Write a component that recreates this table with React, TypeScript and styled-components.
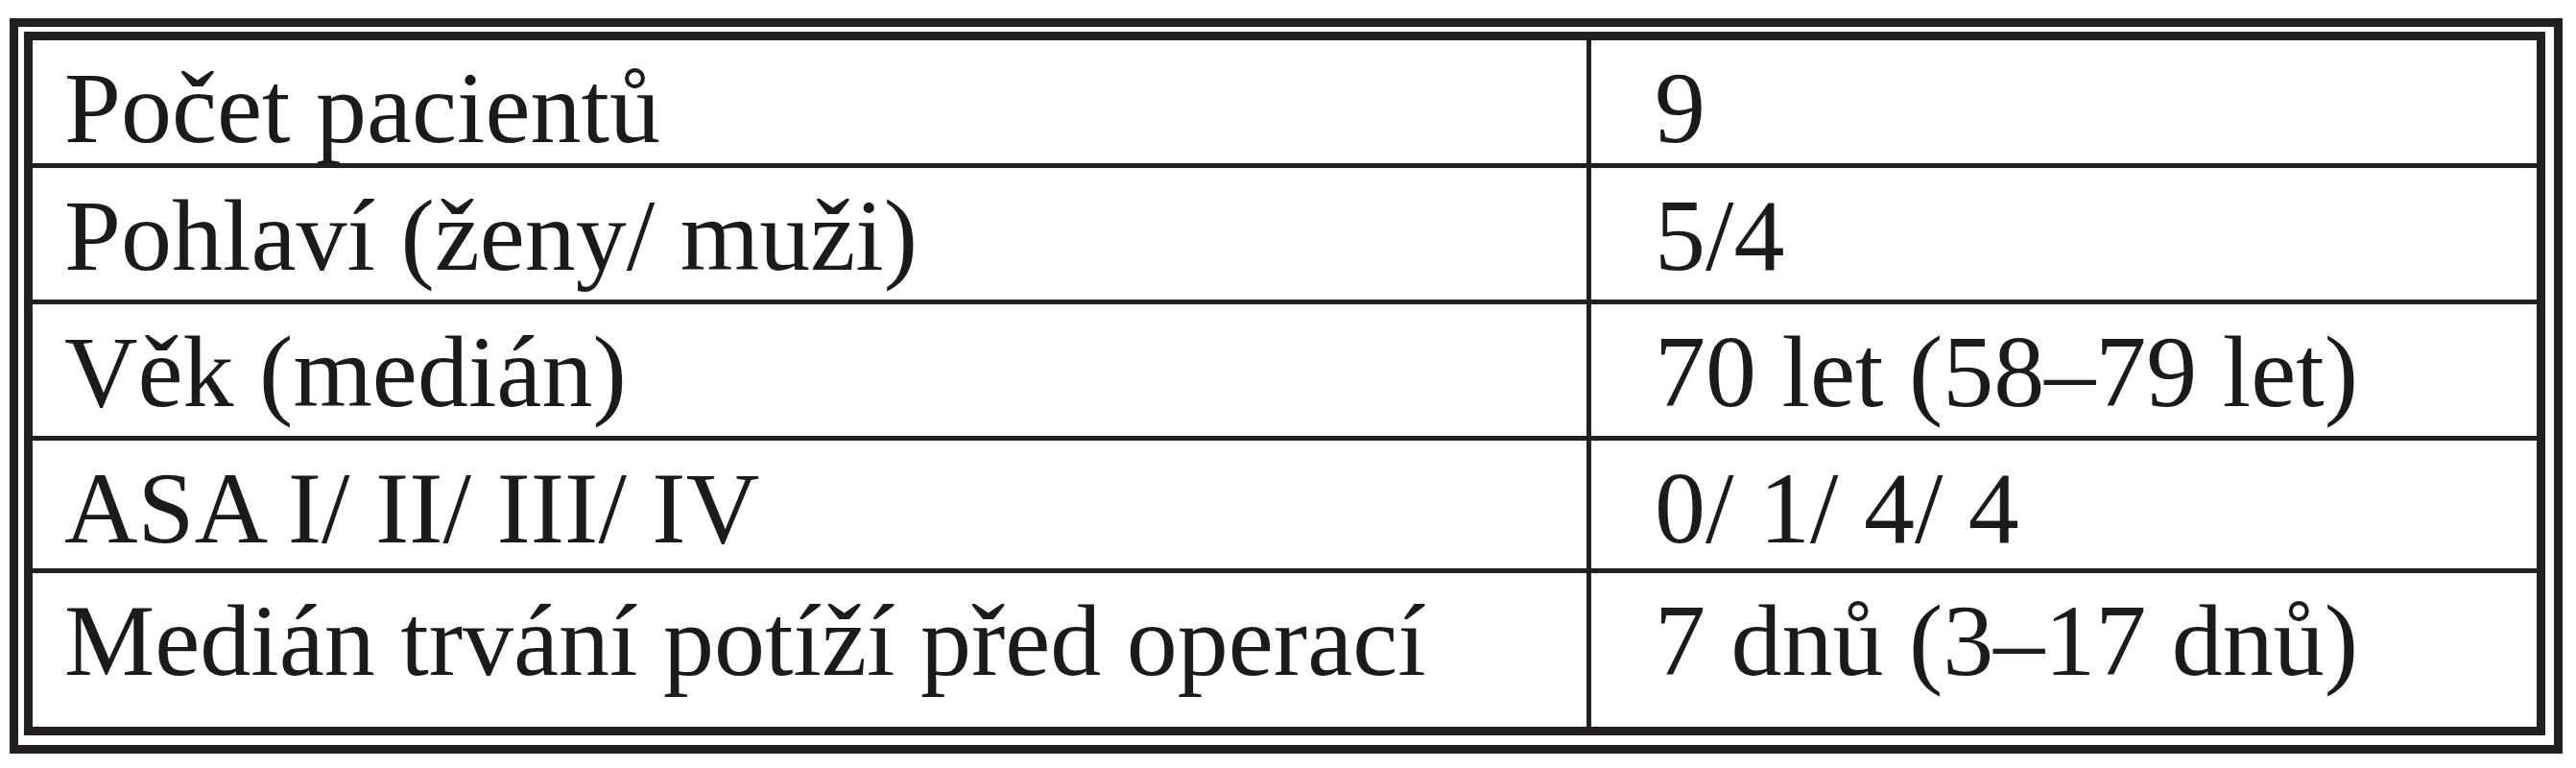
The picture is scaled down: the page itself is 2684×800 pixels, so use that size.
import * as React from 'react';
import styled, { createGlobalStyle } from 'styled-components';

interface Row {
  label: string;
  value: string;
  height: number;
}

const rows: Row[] = [
  { label: 'Počet pacientů', value: '9', height: 128 },
  { label: 'Pohlaví (ženy/ muži)', value: '5/4', height: 142 },
  { label: 'Věk (medián)', value: '70 let (58–79 let)', height: 142 },
  { label: 'ASA I/ II/ III/ IV', value: '0/ 1/ 4/ 4', height: 138 },
  { label: 'Medián trvání potíží před operací', value: '7 dnů (3–17 dnů)', height: 165 },
];

const GlobalStyle = createGlobalStyle`
  body {
    margin: 0;
    background: #ffffff;
    font-family: "Liberation Serif", "Times New Roman", serif;
  }
`;

const Page = styled.div`
  padding: 19px 0 0 10px;
`;

const Frame = styled.div`
  width: 2660px;
  box-sizing: border-box;
  border: 9px solid #231f20;
  padding: 5px 9px 10px 6px;
`;

const Table = styled.div`
  border: 9px solid #231f20;
  display: flex;
  flex-direction: column;
`;

const TableRow = styled.div<{ $height: number; $first: boolean }>`
  display: flex;
  box-sizing: border-box;
  height: ${p => p.$height}px;
  border-top: ${p => (p.$first ? 'none' : '5px solid #231f20')};
`;

const Cell = styled.div<{ $label?: boolean }>`
  box-sizing: border-box;
  width: ${p => (p.$label ? '1624px' : 'auto')};
  flex: ${p => (p.$label ? 'none' : '1')};
  border-right: ${p => (p.$label ? '5px solid #231f20' : 'none')};
  padding: 18px 0 0 ${p => (p.$label ? '33px' : '66px')};
  font-size: 106px;
  line-height: 1;
  color: #1c1a1a;
  white-space: nowrap;
`;

export default function App() {
  return (
    <Page>
      <GlobalStyle />
      <Frame>
        <Table>
          {rows.map((row, index) => (
            <TableRow key={index} $height={row.height} $first={index === 0}>
              <Cell $label>{row.label}</Cell>
              <Cell>{row.value}</Cell>
            </TableRow>
          ))}
        </Table>
      </Frame>
    </Page>
  );
}
